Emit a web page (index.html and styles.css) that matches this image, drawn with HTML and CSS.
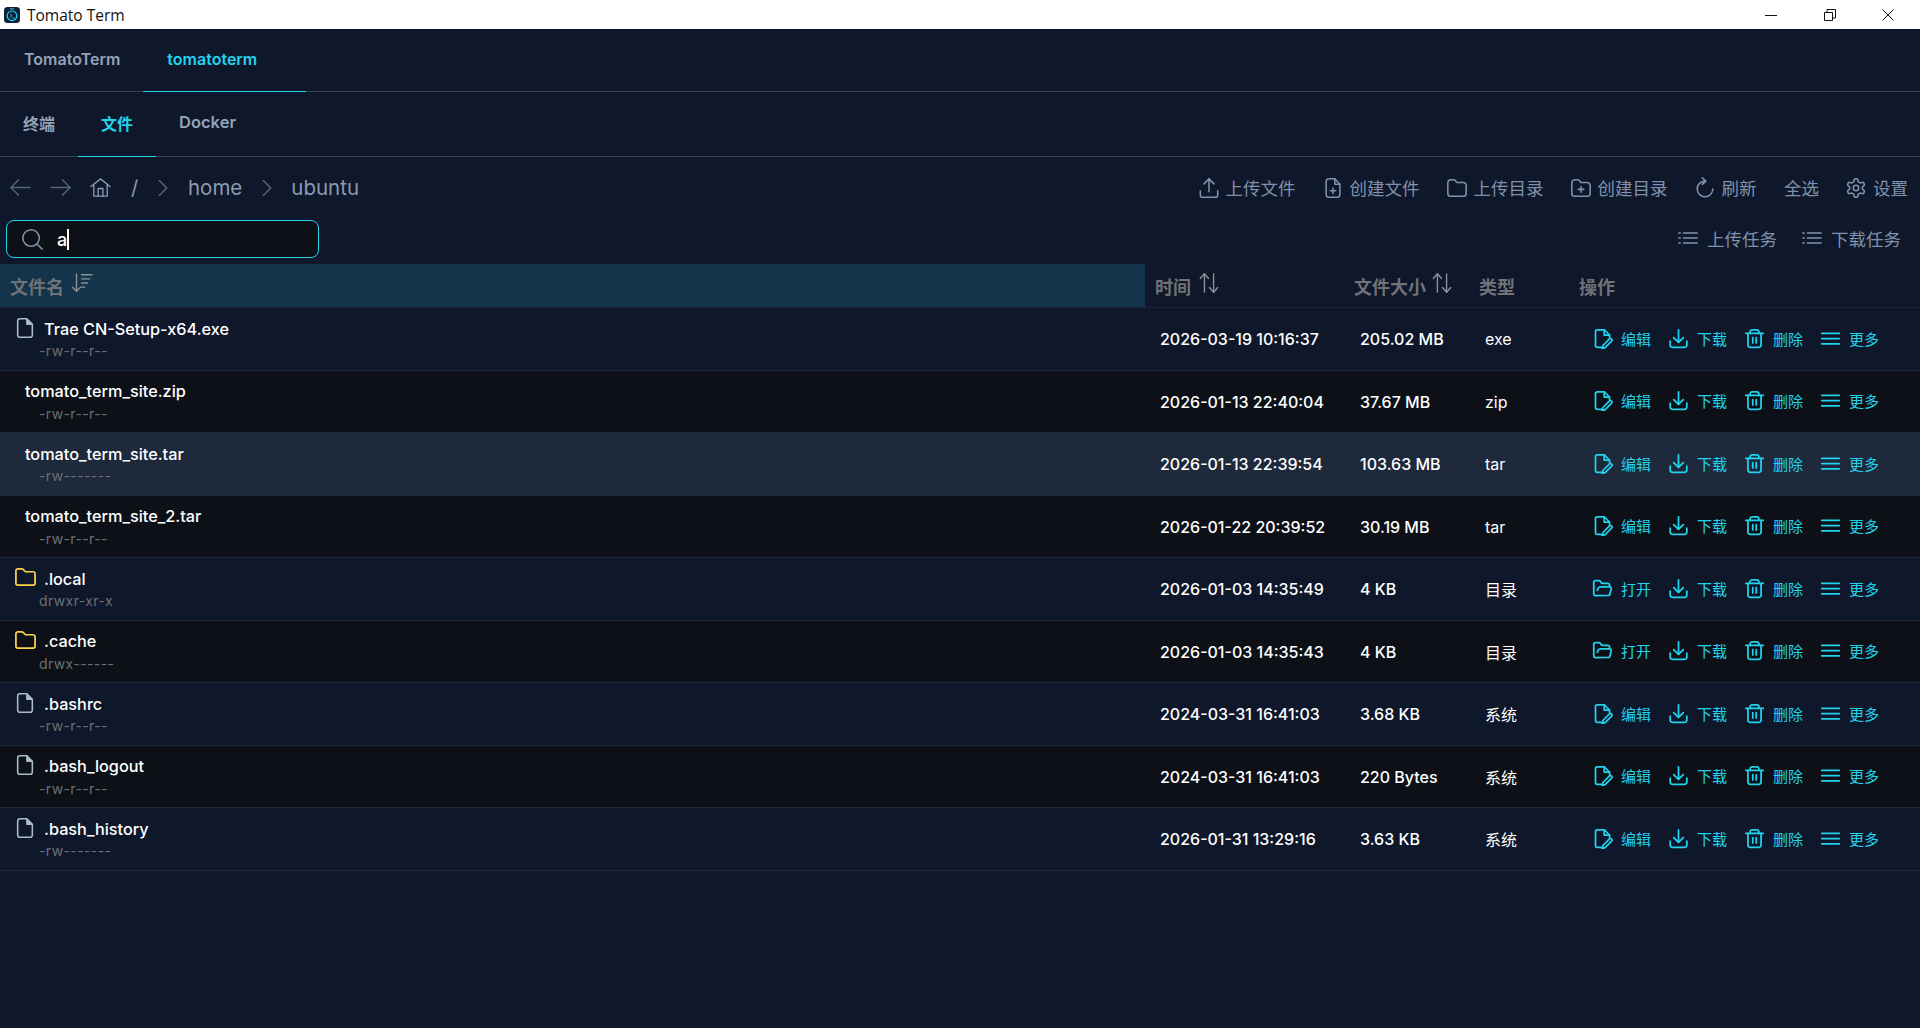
FILE: index.html
```html
<!DOCTYPE html>
<html lang="zh-CN">
<head>
<meta charset="utf-8">
<title>Tomato Term</title>
<link rel="stylesheet" href="styles.css">
</head>
<body>
<svg class="defs" aria-hidden="true">
  <symbol id="i-file" viewBox="0 0 24 24"><path d="M14 2H6.500A2.500 2.500 0 0 0 4 4.500v15A2.500 2.500 0 0 0 6.500 22h11a2.500 2.500 0 0 0 2.500-2.500V8z"/><path d="M14 2v6h6" fill="currentColor" stroke-width="1.500"/></symbol>
  <symbol id="i-folder" viewBox="0 0 24 24"><path d="M4 20h16a2 2 0 0 0 2-2V8a2 2 0 0 0-2-2h-8L9.500 3.500A2 2 0 0 0 8 3H4a2 2 0 0 0-2 2v13a2 2 0 0 0 2 2z"/></symbol>
  <symbol id="i-edit" viewBox="0 0 24 24"><path d="M10.500 22H6a2 2 0 0 1-2-2V4a2 2 0 0 1 2-2h8l6 6v2.500"/><path d="M14 2v6h6"/><path d="M20 12.500a1.700 1.700 0 0 1 2.400 2.400L15 22.500l-3.500 1 1-3.500z"/></symbol>
  <symbol id="i-open" viewBox="0 0 24 24"><path d="m6 14 1.500-2.900A2 2 0 0 1 9.240 10H20a2 2 0 0 1 1.940 2.500l-1.540 6a2 2 0 0 1-1.950 1.500H4a2 2 0 0 1-2-2V5a2 2 0 0 1 2-2h3.900a2 2 0 0 1 1.690.9l.81 1.200a2 2 0 0 0 1.670.9H18a2 2 0 0 1 2 2v2"/></symbol>
  <symbol id="i-down" viewBox="0 0 24 24"><path d="M2.500 15v4.500A2.500 2.500 0 0 0 5 22h14a2.500 2.500 0 0 0 2.500-2.500V15"/><path d="M12 2v14"/><path d="m6.500 11 5.500 5.500 5.500-5.500"/></symbol>
  <symbol id="i-up" viewBox="0 0 24 24"><path d="M2.500 15v4.500A2.500 2.500 0 0 0 5 22h14a2.500 2.500 0 0 0 2.500-2.500V15"/><path d="M12 16V2"/><path d="M6.500 7.500 12 2l5.500 5.500"/></symbol>
  <symbol id="i-trash" viewBox="0 0 24 24"><path d="M2 6h20"/><path d="M7 6V4.500A2.500 2.500 0 0 1 9.500 2h5A2.500 2.500 0 0 1 17 4.500V6"/><path d="M4.500 6v13.500A2.500 2.500 0 0 0 7 22h10a2.500 2.500 0 0 0 2.500-2.500V6"/><path d="M10 11v6"/><path d="M14 11v6"/></symbol>
  <symbol id="i-more" viewBox="0 0 24 24"><path d="M2 6h20"/><path d="M2 12h20"/><path d="M2 18h20"/></symbol>
  <symbol id="i-fileplus" viewBox="0 0 24 24"><path d="M14 2H7.500A3 3 0 0 0 4.500 5v14a3 3 0 0 0 3 3h9a3 3 0 0 0 3-3V8z"/><path d="M14 2v6h5.500"/><path d="M12 12v6"/><path d="M9 15h6"/></symbol>
  <symbol id="i-dir" viewBox="0 0 24 24"><path d="M5 21h14a3 3 0 0 0 3-3V9a3 3 0 0 0-3-3h-7L9.500 3.200A3 3 0 0 0 7.500 3H5a3 3 0 0 0-3 3v12a3 3 0 0 0 3 3z"/></symbol>
  <symbol id="i-dirplus" viewBox="0 0 24 24"><path d="M5 21h14a3 3 0 0 0 3-3V9a3 3 0 0 0-3-3h-7L9.500 3.200A3 3 0 0 0 7.500 3H5a3 3 0 0 0-3 3v12a3 3 0 0 0 3 3z"/><path d="M12 10.500v6"/><path d="M9 13.500h6"/></symbol>
  <symbol id="i-refresh" viewBox="0 0 24 24"><path d="M12 4.500A8.500 8.500 0 1 0 20.500 13"/><path d="m9 1 4 3.500L9 8"/></symbol>
  <symbol id="i-gear" viewBox="0 0 24 24"><path d="M12.220 2h-.44a2 2 0 0 0-2 2v.18a2 2 0 0 1-1 1.730l-.43.25a2 2 0 0 1-2 0l-.15-.08a2 2 0 0 0-2.730.73l-.22.38a2 2 0 0 0 .73 2.730l.15.1a2 2 0 0 1 1 1.720v.51a2 2 0 0 1-1 1.740l-.15.09a2 2 0 0 0-.73 2.730l.22.38a2 2 0 0 0 2.730.73l.15-.08a2 2 0 0 1 2 0l.43.25a2 2 0 0 1 1 1.730V20a2 2 0 0 0 2 2h.44a2 2 0 0 0 2-2v-.18a2 2 0 0 1 1-1.730l.43-.25a2 2 0 0 1 2 0l.15.08a2 2 0 0 0 2.730-.73l.22-.39a2 2 0 0 0-.73-2.730l-.15-.08a2 2 0 0 1-1-1.740v-.5a2 2 0 0 1 1-1.740l.15-.09a2 2 0 0 0 .73-2.730l-.22-.38a2 2 0 0 0-2.730-.73l-.15.08a2 2 0 0 1-2 0l-.43-.25a2 2 0 0 1-1-1.730V4a2 2 0 0 0-2-2z"/><circle cx="12" cy="12" r="3"/></symbol>
  <symbol id="i-list" viewBox="0 0 24 24"><path d="M7 6.500h15"/><path d="M7 12h15"/><path d="M7 17.500h15"/><path d="M2 6.500h1.500"/><path d="M2 12h1.500"/><path d="M2 17.500h1.500"/></symbol>
  <symbol id="i-sort" viewBox="0 0 24 24"><path d="M6 2v19"/><path d="m1.500 16.500 4.500 4.500 4.500-4.500"/><path d="M11.500 3H23"/><path d="M11.500 7.500H20.500"/><path d="M11.500 12H18"/><path d="M11.500 16.500H15"/></symbol>
  <symbol id="i-both" viewBox="0 0 24 24"><path d="M7 22V2"/><path d="M2.500 7 7 2l4.500 5"/><path d="M17 2v20"/><path d="m12.500 17 4.500 5 4.500-5"/></symbol>
</svg>

<header class="titlebar">
  <svg class="app-logo" viewBox="0 0 16 16"><rect width="16" height="16" rx="3.500" fill="#0c2238"/><circle cx="8" cy="8.800" r="4.800" fill="none" stroke="#22d3ee" stroke-width="1.200"/><path d="M6 1.900h4M6.200 7l1.800 1.700-1.800 1.700M8.500 11h2" fill="none" stroke="#22d3ee" stroke-width="1"/></svg>
  <span class="app-title">Tomato Term</span>
  <div class="winctl">
    <svg class="win-ico" viewBox="0 0 12 12"><path d="M0 6.500h12"/></svg>
    <svg class="win-ico" viewBox="0 0 12 12"><path d="M.5 3.500h8v8h-8z"/><path d="M3 3.500V.5h8.500v8.500h-3"/></svg>
    <svg class="win-ico" viewBox="0 0 12 12"><path d="m.5.500 11 11M11.500.5l-11 11"/></svg>
  </div>
</header>

<nav class="tabs tabs-top">
  <a class="tab">TomatoTerm</a>
  <a class="tab tab-on tab-closable">tomatoterm</a>
</nav>
<nav class="tabs tabs-sub">
  <a class="sub">终端</a>
  <a class="sub sub-on">文件</a>
  <a class="sub sub-latin">Docker</a>
</nav>

<section class="bar bar-path">
  <div class="crumbs">
    <svg class="ico ico-nav dim" viewBox="0 0 24 24"><path d="M22 12H2"/><path d="m10 4-8 8 8 8"/></svg>
    <svg class="ico ico-nav dim" viewBox="0 0 24 24"><path d="M2 12h20"/><path d="m14 4 8 8-8 8"/></svg>
    <svg class="ico ico-nav" viewBox="0 0 24 24"><path d="M2 11 12 3l10 8"/><path d="M5 9v12h14V9"/><path d="M9.500 21v-8h5v8"/></svg>
    <span class="crumb-root">/</span>
    <svg class="ico ico-chev" viewBox="0 0 12 24"><path d="m1.500 3 9 9-9 9"/></svg>
    <span class="crumb">home</span>
    <svg class="ico ico-chev" viewBox="0 0 12 24"><path d="m1.500 3 9 9-9 9"/></svg>
    <span class="crumb crumb-last">ubuntu</span>
  </div>
  <div class="actions actions-main">
    <a class="act"><svg class="ico ico-act"><use href="#i-up"/></svg>上传文件</a>
    <a class="act"><svg class="ico ico-act"><use href="#i-fileplus"/></svg>创建文件</a>
    <a class="act"><svg class="ico ico-act"><use href="#i-dir"/></svg>上传目录</a>
    <a class="act"><svg class="ico ico-act"><use href="#i-dirplus"/></svg>创建目录</a>
    <a class="act"><svg class="ico ico-act"><use href="#i-refresh"/></svg>刷新</a>
    <a class="act act-plain">全选</a>
    <a class="act"><svg class="ico ico-act"><use href="#i-gear"/></svg>设置</a>
  </div>
</section>

<section class="bar bar-search">
  <div class="search">
    <svg class="ico ico-search" viewBox="0 0 24 24"><circle cx="11" cy="11" r="9"/><path d="m18 18 5 5"/></svg>
    <span class="search-val">a</span><span class="caret"></span>
  </div>
  <div class="actions actions-tasks">
    <a class="act"><svg class="ico ico-act"><use href="#i-list"/></svg>上传任务</a>
    <a class="act"><svg class="ico ico-act"><use href="#i-list"/></svg>下载任务</a>
  </div>
</section>

<section class="table">
  <div class="thead">
    <div class="th th-name">文件名<svg class="ico sort-ico"><use href="#i-sort"/></svg></div>
    <div class="th th-time">时间<svg class="ico sort-ico"><use href="#i-both"/></svg></div>
    <div class="th th-size">文件大小<svg class="ico sort-ico sort-tight"><use href="#i-both"/></svg></div>
    <div class="th th-type">类型</div>
    <div class="th th-ops">操作</div>
  </div>

  <div class="row">
    <div class="c-name"><div class="fname"><svg class="ico f-file"><use href="#i-file"/></svg>Trae CN-Setup-x64.exe</div><div class="perm">-rw-r--r--</div></div>
    <div class="c-time">2026-03-19 10:16:37</div><div class="c-size">205.02 MB</div><div class="c-type">exe</div>
    <div class="ops"><a class="op"><svg class="ico op-ico"><use href="#i-edit"/></svg>编辑</a><a class="op"><svg class="ico op-ico"><use href="#i-down"/></svg>下载</a><a class="op"><svg class="ico op-ico"><use href="#i-trash"/></svg>删除</a><a class="op"><svg class="ico op-ico"><use href="#i-more"/></svg>更多</a></div>
  </div>
  <div class="row row-alt">
    <div class="c-name"><div class="fname fname-plain">tomato_term_site.zip</div><div class="perm">-rw-r--r--</div></div>
    <div class="c-time">2026-01-13 22:40:04</div><div class="c-size">37.67 MB</div><div class="c-type">zip</div>
    <div class="ops"><a class="op"><svg class="ico op-ico"><use href="#i-edit"/></svg>编辑</a><a class="op"><svg class="ico op-ico"><use href="#i-down"/></svg>下载</a><a class="op"><svg class="ico op-ico"><use href="#i-trash"/></svg>删除</a><a class="op"><svg class="ico op-ico"><use href="#i-more"/></svg>更多</a></div>
  </div>
  <div class="row row-hover">
    <div class="c-name"><div class="fname fname-plain">tomato_term_site.tar</div><div class="perm">-rw-------</div></div>
    <div class="c-time">2026-01-13 22:39:54</div><div class="c-size">103.63 MB</div><div class="c-type">tar</div>
    <div class="ops"><a class="op"><svg class="ico op-ico"><use href="#i-edit"/></svg>编辑</a><a class="op"><svg class="ico op-ico"><use href="#i-down"/></svg>下载</a><a class="op"><svg class="ico op-ico"><use href="#i-trash"/></svg>删除</a><a class="op"><svg class="ico op-ico"><use href="#i-more"/></svg>更多</a></div>
  </div>
  <div class="row row-alt">
    <div class="c-name"><div class="fname fname-plain">tomato_term_site_2.tar</div><div class="perm">-rw-r--r--</div></div>
    <div class="c-time">2026-01-22 20:39:52</div><div class="c-size">30.19 MB</div><div class="c-type">tar</div>
    <div class="ops"><a class="op"><svg class="ico op-ico"><use href="#i-edit"/></svg>编辑</a><a class="op"><svg class="ico op-ico"><use href="#i-down"/></svg>下载</a><a class="op"><svg class="ico op-ico"><use href="#i-trash"/></svg>删除</a><a class="op"><svg class="ico op-ico"><use href="#i-more"/></svg>更多</a></div>
  </div>
  <div class="row">
    <div class="c-name"><div class="fname"><svg class="ico f-folder"><use href="#i-folder"/></svg>.local</div><div class="perm">drwxr-xr-x</div></div>
    <div class="c-time">2026-01-03 14:35:49</div><div class="c-size">4 KB</div><div class="c-type">目录</div>
    <div class="ops"><a class="op"><svg class="ico op-ico"><use href="#i-open"/></svg>打开</a><a class="op"><svg class="ico op-ico"><use href="#i-down"/></svg>下载</a><a class="op"><svg class="ico op-ico"><use href="#i-trash"/></svg>删除</a><a class="op"><svg class="ico op-ico"><use href="#i-more"/></svg>更多</a></div>
  </div>
  <div class="row row-alt">
    <div class="c-name"><div class="fname"><svg class="ico f-folder"><use href="#i-folder"/></svg>.cache</div><div class="perm">drwx------</div></div>
    <div class="c-time">2026-01-03 14:35:43</div><div class="c-size">4 KB</div><div class="c-type">目录</div>
    <div class="ops"><a class="op"><svg class="ico op-ico"><use href="#i-open"/></svg>打开</a><a class="op"><svg class="ico op-ico"><use href="#i-down"/></svg>下载</a><a class="op"><svg class="ico op-ico"><use href="#i-trash"/></svg>删除</a><a class="op"><svg class="ico op-ico"><use href="#i-more"/></svg>更多</a></div>
  </div>
  <div class="row">
    <div class="c-name"><div class="fname"><svg class="ico f-file"><use href="#i-file"/></svg>.bashrc</div><div class="perm">-rw-r--r--</div></div>
    <div class="c-time">2024-03-31 16:41:03</div><div class="c-size">3.68 KB</div><div class="c-type">系统</div>
    <div class="ops"><a class="op"><svg class="ico op-ico"><use href="#i-edit"/></svg>编辑</a><a class="op"><svg class="ico op-ico"><use href="#i-down"/></svg>下载</a><a class="op"><svg class="ico op-ico"><use href="#i-trash"/></svg>删除</a><a class="op"><svg class="ico op-ico"><use href="#i-more"/></svg>更多</a></div>
  </div>
  <div class="row row-alt">
    <div class="c-name"><div class="fname"><svg class="ico f-file"><use href="#i-file"/></svg>.bash_logout</div><div class="perm">-rw-r--r--</div></div>
    <div class="c-time">2024-03-31 16:41:03</div><div class="c-size">220 Bytes</div><div class="c-type">系统</div>
    <div class="ops"><a class="op"><svg class="ico op-ico"><use href="#i-edit"/></svg>编辑</a><a class="op"><svg class="ico op-ico"><use href="#i-down"/></svg>下载</a><a class="op"><svg class="ico op-ico"><use href="#i-trash"/></svg>删除</a><a class="op"><svg class="ico op-ico"><use href="#i-more"/></svg>更多</a></div>
  </div>
  <div class="row">
    <div class="c-name"><div class="fname"><svg class="ico f-file"><use href="#i-file"/></svg>.bash_history</div><div class="perm">-rw-------</div></div>
    <div class="c-time">2026-01-31 13:29:16</div><div class="c-size">3.63 KB</div><div class="c-type">系统</div>
    <div class="ops"><a class="op"><svg class="ico op-ico"><use href="#i-edit"/></svg>编辑</a><a class="op"><svg class="ico op-ico"><use href="#i-down"/></svg>下载</a><a class="op"><svg class="ico op-ico"><use href="#i-trash"/></svg>删除</a><a class="op"><svg class="ico op-ico"><use href="#i-more"/></svg>更多</a></div>
  </div>
</section>
</body>
</html>
```

FILE: styles.css
```css
* { box-sizing: border-box; }
html, body { height: 100%; }
body {
  margin: 0;
  overflow: hidden;
  background: #0f172a;
  color: #fff;
  font-family: Inter, "Noto Sans CJK SC", sans-serif;
}
.defs { position: absolute; width: 0; height: 0; }
.ico {
  display: block;
  flex: none;
  fill: none;
  stroke: currentColor;
  stroke-width: 2;
  stroke-linecap: round;
  stroke-linejoin: round;
}

/* title bar */
.titlebar {
  height: 29px;
  background: #fff;
  color: #111;
  display: flex;
  align-items: center;
  padding-left: 4px;
}
.app-logo { width: 16px; height: 16px; margin-right: 7px; }
.app-title { font: 15.500px "Open Sans", sans-serif; }
.winctl { margin-left: auto; display: flex; gap: 46.500px; padding-right: 26px; }
.win-ico { width: 12px; height: 12px; fill: none; stroke: #111; stroke-width: 1; }

/* tabs */
.tabs { display: flex; border-bottom: 1px solid #334155; }
.tabs-top { height: 63px; }
.tabs-sub { height: 65px; }
.tab {
  display: flex;
  align-items: center;
  padding: 0 23px 2px 24px;
  font-size: 16px;
  font-weight: 600;
  color: #94a3b8;
  margin-bottom: -1px;
  border-bottom: 1px solid transparent;
}
.tab-on { color: #22d3ee; border-bottom-color: #22d3ee; }
.tab-closable { padding-right: 49px; }
.sub {
  display: flex;
  align-items: center;
  padding: 0 23px 3px;
  font-size: 16px;
  font-weight: 600;
  color: #94a3b8;
  margin-bottom: -1px;
  border-bottom: 1px solid transparent;
}
.sub-latin { font-size: 16.500px; padding-bottom: 4px; }
.sub-on { color: #22d3ee; border-bottom-color: #22d3ee; }

/* toolbars */
.bar { display: flex; align-items: center; justify-content: space-between; }
.bar-path { height: 63px; padding: 0 12px 2px 9px; }
.bar-search { height: 38px; padding: 0 19px 0 6px; }
.crumbs { display: flex; align-items: center; color: #8a9bb3; }
.ico-nav { width: 23px; height: 23px; margin-right: 17px; stroke-width: 1.400; }
.dim { color: #56657c; }
.crumb-root { font-size: 20px; margin: 0 20px 0 2px; width: 7px; }
.ico-chev { width: 10px; height: 20px; color: #56657c; stroke-width: 1.800; }
.crumb { font-size: 20.500px; margin: 0 20px; }
.crumb-last { margin-left: 19px; }
.actions { display: flex; gap: 24px; }
.actions-main { gap: 26px; }
.actions-main .ico-act { margin-right: -2px; }
.actions-tasks { padding-bottom: 2px; }
.act {
  display: flex;
  align-items: center;
  gap: 8px;
  font-size: 17.500px;
  color: #7f92ad;
}
.act-plain { margin-left: 1.500px; }
.ico-act { width: 22px; height: 22px; stroke-width: 1.700; }

.search {
  width: 313px;
  height: 38px;
  border: 1px solid #22d3ee;
  border-radius: 8px;
  background: #0d1117;
  display: flex;
  align-items: center;
  padding-left: 14px;
}
.ico-search { width: 22px; height: 22px; color: #7f92ad; stroke-width: 1.700; margin-right: 14px; }
.search-val { font-size: 18px; font-weight: 500; }
.caret { width: 2px; height: 21px; background: #fff; }

/* table */
.table { margin-top: 6px; }
.thead, .row {
  display: grid;
  grid-template-columns: 1145px 200px 124px 100px 1fr;
  align-items: center;
}
.thead { height: 44px; font-size: 18px; font-weight: 700; color: #6f7276; border-bottom: 1px solid #1a2435; }
.th { height: 100%; display: flex; align-items: center; padding-left: 10px; }
.th-name { background: #13344a; padding-left: 10px; }
.th-size { padding-left: 9px; }
.th-type { padding-left: 10px; }
.th-ops { padding-left: 10px; }
.sort-ico { width: 22px; height: 22px; margin: -5px 0 0 7px; color: #8d9299; stroke-width: 1.500; }
.sort-tight { margin-left: 5px; }

.row { height: 62.500px; border-bottom: 1px solid #1e293b; font-size: 16px; }
.row-alt { background: #0d1117; }
.row-hover { background: #1e293b; }
.fname { display: flex; align-items: center; height: 20px; padding-left: 14px; font-weight: 500; font-size: 16.250px; }
.fname-plain { padding-left: 25px; }
.f-file { width: 22px; height: 22px; margin: -2px 8px 0 0; color: #a9bccb; stroke-width: 1.700; }
.f-folder { width: 23px; height: 23px; margin: -2px 7px 0 0; color: #fcd34d; stroke-width: 1.800; }
.perm { margin: 3.500px 0 0 39px; font-size: 14px; color: #6b6f76; letter-spacing: .4px; }
.c-time { padding: 1px 0 0 15px; font-weight: 500; }
.c-size { padding: 1px 0 0 15px; font-weight: 500; }
.c-type { padding: 1px 0 0 16px; font-weight: 400; }
.ops { display: flex; gap: 16px; padding: 0 0 1px 22px; }
.op {
  display: flex;
  align-items: center;
  gap: 8px;
  font-size: 15px;
  color: #22d3ee;
  white-space: nowrap;
}
.op-ico { width: 21px; height: 21px; margin-left: 1px; stroke-width: 2; }
```
